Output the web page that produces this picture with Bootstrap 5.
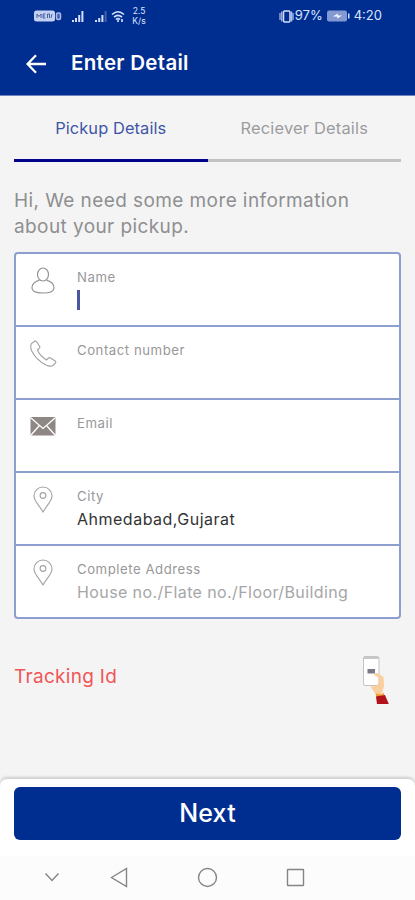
<!DOCTYPE html>
<html lang="en">
<head>
<meta charset="utf-8">
<meta name="viewport" content="width=device-width, initial-scale=1">
<title>Enter Detail</title>
<link href="https://cdn.jsdelivr.net/npm/bootstrap@5.3.0/dist/css/bootstrap.min.css" rel="stylesheet">
<style>
body{font-family:Inter,"Open Sans",sans-serif;background:#f4f4f5;color:#8f8f90;height:900px;overflow:hidden}
svg{display:block;flex:none}
.gutter{padding-left:14px;padding-right:14px}
.app-head{background:#002e90;height:96px;border-bottom:1px solid #6f83bd}
.status-row{height:32px;font-size:13px;color:#dbe4ff;padding:0 33px 0 34px}
.rate{font-size:8.5px;line-height:10px;width:16px;text-align:center}
.title-row{height:63px;padding-left:26px}
.page-title{font-size:20.5px;font-weight:600;letter-spacing:.3px;margin-left:25px}
.tab-item{height:66px;padding-top:20px;border-bottom:3px solid #c2c2c3;font-size:16.4px;line-height:24px;letter-spacing:.2px;color:#9c9c9d}
.tab-item.current{border-color:#02028a;color:#3f55a5;letter-spacing:.1px}
.intro{font-size:19px;line-height:25.5px;margin-top:26px;height:50px;letter-spacing:.41px;white-space:nowrap}
.field-box{border:2px solid #8c9fce;border-radius:4px;margin-top:14px;height:367px}
.field-row{flex:1 1 0;padding:13px 0 0 13px}
.field-row+.field-row{border-top:2px solid #8c9fce}
.field-body{margin-left:20px}
.field-body label{display:block;font-size:13.2px;line-height:20px;color:#989899;letter-spacing:.53px}
.field-body input{display:block;width:100%;height:26px;font-size:16px;letter-spacing:.5px;color:#333;background:none;outline:0}
.field-body input::placeholder{color:#a6a6a7;opacity:1;letter-spacing:.4px}
.caret{width:3px;height:20px;background:#4a56a0;margin-top:3px}
.tracking{color:#f05656;font-size:19px;letter-spacing:.3px;height:52px;margin-top:32px}
.bottom-bar{height:77px;border-radius:7px 7px 0 0;box-shadow:0 -2px 3px rgba(0,0,0,.16);padding-top:8px}
.btn-next,.btn-next:hover{background:#002e90;color:#fff;height:53px;border-radius:6px;font-size:25px;font-weight:500;letter-spacing:.2px;padding:0}
.sys-nav{height:44px;background:#fcfcfc;padding-left:42px}
</style>
</head>
<body class="d-flex flex-column">
<header class="app-head text-white">
  <div class="status-row d-flex align-items-center justify-content-between">
    <div class="d-flex align-items-center">
      <svg width="28" height="12" viewBox="0 0 28 12"><rect y="0.5" width="21" height="11" rx="2.5" fill="#c4d0f2"/><path d="M3 8V4l2 2.500L7 4v4M9 4v4h2.500M9 4h2.500M9 6h2M13.500 8V4h2v4M17 8l1-4" fill="none" stroke="#48629f" stroke-width="1"/><rect x="22.500" y="3" width="4" height="6.500" rx="1.500" fill="#4461aa" stroke="#a9b9e8" stroke-width="1.500"/></svg>
      <svg class="ms-2" width="16" height="13" viewBox="0 0 16 13" fill="#d5dffd"><path d="M2 10h2v2H2zM5 8h2v4H5zM8.200 5h2v7h-2zM11.400 1h2v11h-2z"/></svg>
      <svg class="ms-2" width="16" height="13" viewBox="0 0 16 13" fill="#d5dffd"><path d="M1 10h2v2H1zM4.200 8h2v4h-2zM7.400 5h2v7h-2z"/><path d="M10.600 1h2v11h-2z" fill="#4461aa"/></svg>
      <svg width="17" height="13" viewBox="0 0 17 13" fill="none" stroke="#d5dffd" stroke-width="1.600"><path d="M2 4.500Q8-1 14 4.500M4 7.200Q8 3.500 12 7.200M6 9.500Q8 7.800 10 9.500"/><path d="M8 10v2M12 9v3"/></svg>
      <div class="rate ms-1">2.5<br>K/s</div>
    </div>
    <div class="d-flex align-items-center">
      <svg width="16" height="13" viewBox="0 0 16 13" fill="none" stroke="#d5dffd" stroke-width="1.500"><rect x="4.500" y="1" width="6.500" height="11" rx="1.200"/><path d="M1 3v7M14 3v7M2.800 1.500v10M12.700 1.500v10" stroke-width="1"/></svg>
      <span>97%</span>
      <svg class="mx-1" width="23" height="12" viewBox="0 0 23 12"><rect y=".5" width="20" height="11" rx="2" fill="#8299d3"/><path d="M21 3.500h1.500v5H21z" fill="#d5dffd"/><path d="M6 6.500l5-3-.5 2H15l-5 3 .5-2z" fill="#fff"/></svg>
      <span>4:20</span>
    </div>
  </div>
  <div class="title-row d-flex align-items-center">
    <svg width="20" height="20" viewBox="0 0 20 20" fill="none" stroke="#fff" stroke-width="2.300"><path d="M20 10H2M10 1.300L1.600 10l8.400 8.700"/></svg>
    <span class="page-title">Enter Detail</span>
  </div>
</header>
<main class="flex-grow-1 gutter">
  <div class="d-flex text-center">
    <div class="tab-item current w-50">Pickup Details</div>
    <div class="tab-item w-50">Reciever Details</div>
  </div>
  <p class="intro mb-0">Hi, We need some more information<br>about your pickup.</p>
  <form class="field-box bg-white d-flex flex-column">
    <div class="field-row d-flex">
      <svg width="28" height="28" viewBox="0 0 28 28" fill="none" stroke="#949494" stroke-width="1.200"><ellipse cx="14" cy="7.500" rx="5.500" ry="6.500"/><path d="M10.500 13.200C6 14.500 3 16.500 3 21q0 5 11 5t11-5c0-4.500-3-6.500-7.500-7.800"/></svg>
      <div class="field-body"><label>Name</label><div class="caret"></div></div>
    </div>
    <div class="field-row d-flex">
      <svg width="28" height="28" viewBox="0 0 28 28" fill="none" stroke="#a2a2a2" stroke-width="1.100"><path d="M2.500 3.500L6 1q1 0 1.700 1l3 4.500q.5 1-.5 1.800L8.500 10q2.500 6 9 10l2-2q1-.8 2 0l4.700 3q1 .8.300 2L24 25.500q-2.500 1.500-7-.5Q7 20 2.500 10.500 1 6 2.500 3.500z"/></svg>
      <div class="field-body flex-grow-1"><label for="phone">Contact number</label><input class="border-0 p-0" id="phone"></div>
    </div>
    <div class="field-row d-flex">
      <svg width="28" height="28" viewBox="0 0 28 28"><rect x="1.500" y="4" width="25" height="18.500" rx="1.500" fill="#8e8786"/><path d="M2 5l12 10.500L26 5M2 22l8.500-9.500M26 22l-8.500-9.500" fill="none" stroke="#fff" stroke-width="1.300"/></svg>
      <div class="field-body flex-grow-1"><label for="email">Email</label><input class="border-0 p-0" id="email"></div>
    </div>
    <div class="field-row d-flex">
      <svg width="28" height="28" viewBox="0 0 28 28" fill="none" stroke="#a2a2a2" stroke-width="1.100"><path d="M14 26C10 19 5 15 5 10a9 9 0 0 1 18 0c0 5-5 9-9 16z"/><circle cx="14" cy="9.500" r="2.900"/></svg>
      <div class="field-body flex-grow-1"><label for="city">City</label><input class="border-0 p-0" id="city" value="Ahmedabad,Gujarat"></div>
    </div>
    <div class="field-row d-flex">
      <svg width="28" height="28" viewBox="0 0 28 28" fill="none" stroke="#a2a2a2" stroke-width="1.100"><path d="M14 26C10 19 5 15 5 10a9 9 0 0 1 18 0c0 5-5 9-9 16z"/><circle cx="14" cy="9.500" r="2.900"/></svg>
      <div class="field-body flex-grow-1"><label for="addr">Complete Address</label><input class="border-0 p-0" id="addr" placeholder="House no./Flate no./Floor/Building"></div>
    </div>
  </form>
  <div class="tracking d-flex align-items-center justify-content-between">
    <span>Tracking Id</span>
    <svg width="40" height="54" viewBox="0 0 40 54"><rect x="2.500" y="6.500" width="15.500" height="29" rx="1.500" fill="#fff" stroke="#c4c4c7"/><path d="M3 8h14.500" stroke="#b5b5b9" stroke-width="1.500"/><path d="M6.500 19h7.500v4.500H6.500z" fill="#777a86"/><path d="M13 25q1-3 4-1.500l5.500 3.500.5 9-2.500 9-6-1-5-7.500 5.500-.5 3-3.500-.5-5z" fill="#f9cf9d"/><path d="M14.500 43.500l6.500 1 1.500-2 1 3-8 2z" fill="#ef9c30"/><path d="M15 46.500l9-1.500 4 9.500-12-.5z" fill="#b3121d"/></svg>
  </div>
</main>
<footer>
  <div class="bottom-bar bg-white gutter"><button class="btn btn-next w-100 d-block border-0">Next</button></div>
  <nav class="sys-nav">
    <svg width="300" height="42" viewBox="42 0 300 42" fill="none" stroke="#858585" stroke-width="1.400"><path d="M45.500 17.500l6.500 7 6.500-7M111.500 21.500l15-9v18zM"/><circle cx="207.500" cy="21.500" r="9"/><rect x="287.500" y="13.500" width="16" height="16" rx=".5"/></svg>
  </nav>
</footer>
<script src="https://cdn.jsdelivr.net/npm/bootstrap@5.3.0/dist/js/bootstrap.bundle.min.js"></script>
</body>
</html>
